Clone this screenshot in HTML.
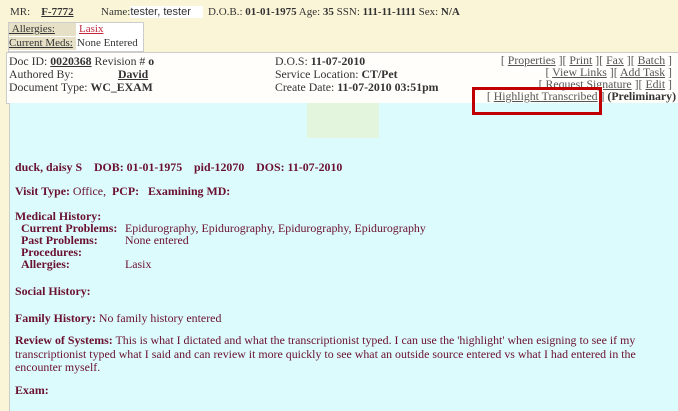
<!DOCTYPE html>
<html><head><style>
body{margin:0;width:678px;height:411px;overflow:hidden;background:#fbf5d8;font-family:"Liberation Serif",Georgia,serif;font-size:11px;color:#333;position:relative}
.a{position:absolute;white-space:nowrap}
.d{font-size:11.8px}
.c{font-size:11.9px}
b{font-weight:bold}
u{text-decoration:underline}
.m{color:#6a1030}
.mb{color:#6a1030;font-weight:bold}
</style></head><body>
<div class="a" style="left:10px;top:6px;font-size:11px">MR: &nbsp;&nbsp;&nbsp;<b><u>F-7772</u></b></div>
<div class="a" style="left:101px;top:6px">Name:<span style="font-family:'Liberation Sans',sans-serif;background:#fff;padding:0 12px 0 0">tester, tester</span></div>
<div class="a" style="left:208px;top:6px">D.O.B.: <b>01-01-1975</b> Age: <b>35</b> SSN: <b>111-11-1111</b> Sex: <b>N/A</b></div>
<div class="a" style="left:8px;top:22px;width:134px;height:28px;border:1px solid #ccc;background:#fff"></div>
<div class="a" style="left:9px;top:23px;width:67px;height:13px;background:#e6e1c6;text-decoration:underline">&nbsp;Allergies:</div>
<div class="a" style="left:79px;top:23px;color:#c0283c;text-decoration:underline">Lasix</div>
<div class="a" style="left:9px;top:37px;width:67px;height:13px;background:#e6e1c6;text-decoration:underline">Current Meds:</div>
<div class="a" style="left:77px;top:37px">None Entered</div>
<div class="a" style="left:6px;top:52px;width:672px;height:50px;background:#fffefa;border-top:1px solid #ccc;border-bottom:1px solid #ccc;border-left:1px solid #ccc"></div>
<div class="a d" style="left:9px;top:54px">Doc ID: <b><u>0020368</u></b> Revision # <b>o</b></div>
<div class="a d" style="left:9px;top:67px">Authored By:</div>
<div class="a d" style="left:118px;top:67px"><b><u>David</u></b></div>
<div class="a d" style="left:9px;top:80px">Document Type: <b>WC_EXAM</b></div>
<div class="a d" style="left:275px;top:54px">D.O.S: <b>11-07-2010</b></div>
<div class="a d" style="left:275px;top:67px">Service Location: <b>CT/Pet</b></div>
<div class="a d" style="left:275px;top:80px">Create Date: <b>11-07-2010 03:51pm</b></div>
<div class="a d" style="right:6px;top:53px;color:#555">[ <u>Properties</u> ][ <u>Print</u> ][ <u>Fax</u> ][ <u>Batch</u> ]</div>
<div class="a d" style="right:6px;top:65px;color:#555">[ <u>View Links</u> ][ <u>Add Task</u> ]</div>
<div class="a d" style="right:6px;top:77px;color:#555">[ <u>Request Signature</u> ][ <u>Edit</u> ]</div>
<div class="a d" style="right:2px;top:89px;color:#555">[ <u>Highlight Transcribed</u> ] <b style="color:#333">(Preliminary)</b></div>
<div class="a" style="left:9px;top:103px;width:669px;height:308px;background:#dcfbfc;border-left:1px solid #ccc"></div>
<div class="a" style="left:307px;top:103px;width:72px;height:35px;background:#e3f5dc"></div>
<div class="a" style="left:472px;top:87px;width:124px;height:22px;border:3px solid #c00000"></div>
<div class="a mb c" style="left:15px;top:160px">duck, daisy S &nbsp;&nbsp; DOB: 01-01-1975 &nbsp;&nbsp; pid-12070 &nbsp;&nbsp; DOS: 11-07-2010</div>
<div class="a m c" style="left:15px;top:184px"><b>Visit Type:</b> Office, &nbsp;<b>PCP:</b> &nbsp;&nbsp;<b>Examining MD:</b></div>
<div class="a mb c" style="left:15px;top:209px">Medical History:</div>
<div class="a mb c" style="left:21px;top:221px">Current Problems:</div>
<div class="a m c" style="left:125px;top:221px">Epidurography, Epidurography, Epidurography, Epidurography</div>
<div class="a mb c" style="left:21px;top:233px">Past Problems:</div>
<div class="a m c" style="left:125px;top:233px">None entered</div>
<div class="a mb c" style="left:21px;top:245px">Procedures:</div>
<div class="a mb c" style="left:21px;top:257px">Allergies:</div>
<div class="a m c" style="left:125px;top:257px">Lasix</div>
<div class="a mb c" style="left:15px;top:284px">Social History:</div>
<div class="a m c" style="left:15px;top:311px"><b>Family History:</b> No family history entered</div>
<div class="a m c" style="left:15px;top:334px;white-space:normal;width:640px;line-height:13.5px"><b>Review of Systems:</b> This is what I dictated and what the transcriptionist typed. I can use the 'highlight' when esigning to see if my transcriptionist typed what I said and can review it more quickly to see what an outside source entered vs what I had entered in the encounter myself.</div>
<div class="a mb c" style="left:15px;top:383px">Exam:</div>
</body></html>
